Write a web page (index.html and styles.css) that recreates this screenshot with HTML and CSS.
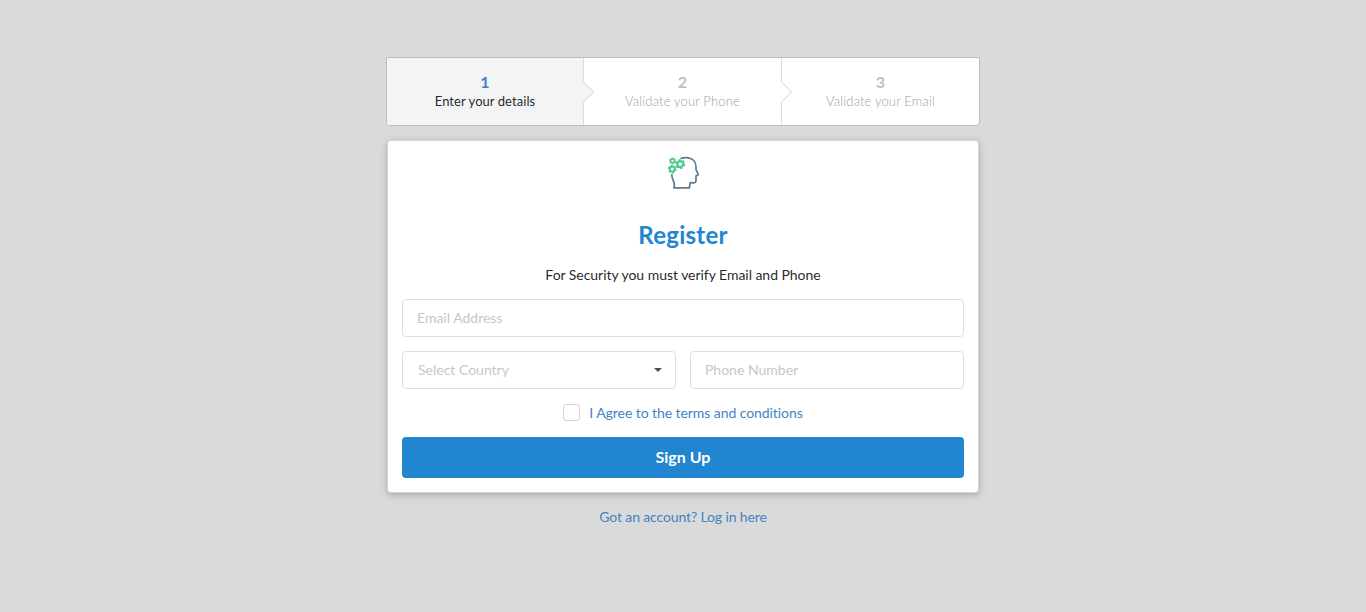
FILE: index.html
```html
<!DOCTYPE html>
<html lang="en">
<head>
<meta charset="utf-8">
<title>Register</title>
<link rel="stylesheet" href="styles.css">
</head>
<body>
<main class="page">
  <div class="steps">
    <div class="step active"><div class="step-title">1</div><div class="step-text">Enter your details</div></div>
    <div class="step"><div class="step-title">2</div><div class="step-text">Validate your Phone</div></div>
    <div class="step"><div class="step-title">3</div><div class="step-text">Validate your Email</div></div>
  </div>
  <form class="card">
    <svg class="logo" viewBox="0 0 32 32" fill="none">
      <path stroke="#5b7b92" stroke-width="1.700" stroke-linejoin="round" d="M12.500 2C15 1.200 18 1 20.500 1.300C25.500 2 28 6 28 10.500V13L30.300 18.200L28 19.500V24C28 26 26.500 26.500 25 26.300L22.300 26L21.300 31.300H5.800C7.300 28 6.300 26 5 23.500C4.200 21.500 3.700 20 3.700 17.500"/>
      <g stroke="#4ccb8b">
        <circle cx="4.500" cy="4.300" r="2" stroke-width="1.700"/>
        <circle cx="4.500" cy="4.300" r="2.900" stroke-width="1.200" stroke-dasharray="1.500 1.540"/>
        <circle cx="12.200" cy="7.600" r="3" stroke-width="2.300"/>
        <circle cx="12.200" cy="7.600" r="4.300" stroke-width="1.400" stroke-dasharray="2.300 2.200"/>
        <circle cx="4.200" cy="12.600" r="2.600" stroke-width="2"/>
        <circle cx="4.200" cy="12.600" r="3.700" stroke-width="1.300" stroke-dasharray="2 1.870"/>
      </g>
    </svg>
    <h1 class="heading">Register</h1>
    <p class="intro">For Security you must verify Email and Phone</p>
    <input class="field" type="email" placeholder="Email Address">
    <div class="row">
      <div class="field select"><span class="select-text">Select Country</span><svg class="caret" viewBox="0 0 8 4"><path d="M0 0H8L4 4Z" fill="#505050"/></svg></div>
      <input class="field" type="tel" placeholder="Phone Number">
    </div>
    <label class="agree"><input class="check" type="checkbox"><span>I Agree to the terms and conditions</span></label>
    <button class="submit" type="button">Sign Up</button>
  </form>
  <a class="login" href="#">Got an account? Log in here</a>
</main>
</body>
</html>
```
FILE: styles.css
```css
* { box-sizing: border-box; }
body {
  margin: 0;
  min-height: 612px;
  background: #dadada;
  color: rgba(0, 0, 0, .87);
  font: 14px/20px Lato, sans-serif;
}
.page { width: 594px; margin: 0 auto; padding-top: 57px; }
.steps {
  display: grid;
  grid-template-columns: 197px 198px 1fr;
  height: 69px;
  background: #fff;
  border: 1px solid #bbbcbd;
  border-radius: 0 0 4px 4px;
}
.step {
  position: relative;
  display: flex;
  flex-direction: column;
  align-items: center;
  padding-top: 15px;
  border-right: 1px solid #dededf;
  color: #bfbfbf;
}
.step:first-child { border-radius: 0 0 0 3px; }
.step:last-child { border-right: 0; }
.step:not(:last-child)::after {
  content: "";
  position: absolute;
  z-index: 1;
  top: 26px;
  right: -8px;
  width: 15px;
  height: 15px;
  background: #fff;
  border: solid #dededf;
  border-width: 1px 1px 0 0;
  transform: rotate(45deg);
}
.active, .active.step::after { background: #f3f4f5; }
.step-title { font-size: 16px; line-height: 18px; font-weight: 700; }
.active .step-title { color: #4183c4; }
.step-text { font-size: 13px; line-height: 21px; font-weight: 300; letter-spacing: .16px; color: #a2a2a2; }
.active .step-text { color: rgba(0, 0, 0, .87); font-weight: 400; letter-spacing: .06px; }
.card {
  display: flex;
  flex-direction: column;
  align-items: center;
  width: 592px;
  height: 353px;
  margin: 14px auto 0;
  padding: 15px 14px 14px;
  background: #fff;
  border: 1px solid #d4d4d5;
  border-radius: 4px;
  box-shadow: 0 2px 4px rgba(34, 36, 38, .12), 0 2px 10px rgba(34, 36, 38, .15);
}
.logo { width: 32px; height: 33px; flex: none; margin-left: 2px; }
.heading {
  margin: 30px 0 0;
  color: #2185d0;
  font-size: 24px;
  line-height: 32px;
  font-weight: 700;
  letter-spacing: .25px;
}
.intro { margin: 14px 0; letter-spacing: -.04px; }
.field {
  width: 100%;
  height: 38px;
  flex: none;
  padding: 0 14px 2px;
  background: #fff;
  border: 1px solid #dededf;
  border-radius: 4px;
  font: 14px/17px Lato, sans-serif;
}
.field::placeholder { color: #c7c7c7; opacity: 1; }
.row {
  display: grid;
  grid-template-columns: 1fr 1fr;
  gap: 14px;
  width: 100%;
  margin-top: 14px;
}
.select {
  display: flex;
  align-items: center;
  justify-content: space-between;
  padding: 0 13px 0 15px;
  color: #c7c7c7;
}
.select-text { padding-bottom: 2px; }
.caret { width: 8px; height: 4px; }
.agree {
  display: flex;
  align-items: center;
  gap: 9px;
  height: 20px;
  margin-top: 14px;
  color: #4183c4;
  letter-spacing: -.07px;
}
.check {
  appearance: none;
  width: 17px;
  height: 17px;
  margin: 0 0 2px;
  background: #fff;
  border: 1px solid #d4d4d5;
  border-radius: 3px;
}
.submit {
  width: 100%;
  height: 41px;
  margin-top: 14px;
  padding: 0 0 2px;
  border: 0;
  border-radius: 4px;
  background: #2185d0;
  color: #fff;
  font: 700 16px/16px Lato, sans-serif;
}
.login {
  display: block;
  margin-top: 14px;
  color: #4183c4;
  text-align: center;
  text-decoration: none;
  letter-spacing: -.13px;
}
```
